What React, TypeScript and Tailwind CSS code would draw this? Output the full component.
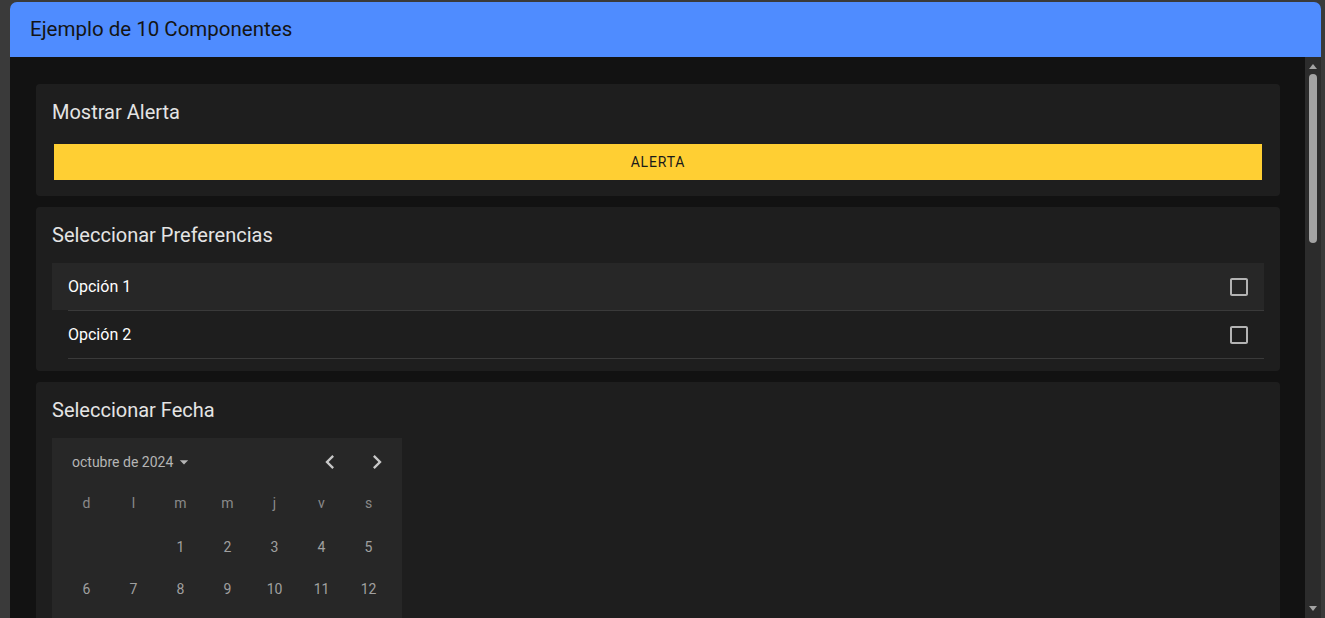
const font = { fontFamily: "Roboto, 'Liberation Sans', sans-serif" };

const weekDays = ["d", "l", "m", "m", "j", "v", "s"];
const weeks = [
  ["", "", "1", "2", "3", "4", "5"],
  ["6", "7", "8", "9", "10", "11", "12"],
];

function Card({ title, children, pb = "pb-4" }: { title: string; children: React.ReactNode; pb?: string }) {
  return (
    <section className={`rounded bg-[#1e1e1e] px-4 pt-4 ${pb}`}>
      <h2 className="h-6 text-[20px] leading-6 text-[#e4e4e4]">{title}</h2>
      {children}
    </section>
  );
}

function CheckboxIcon() {
  return (
    <svg viewBox="0 0 24 24" className="h-6 w-6 fill-[#b3b3b3]">
      <path d="M19 5v14H5V5h14m0-2H5c-1.11 0-2 .9-2 2v14c0 1.1.89 2 2 2h14c1.1 0 2-.9 2-2V5c0-1.1-.9-2-2-2z" />
    </svg>
  );
}

function Calendar() {
  return (
    <div className="mt-4 h-[200px] w-[350px] bg-[#272727] pt-3">
      <div className="flex h-6 items-center pl-5 pr-[7px]">
        <span className="text-[14px] text-[#b5b5b5]">octubre de 2024</span>
        <svg viewBox="0 0 24 24" className="ml-[1px] h-5 w-5 fill-[#b5b5b5]">
          <path d="M7 10l5 5 5-5z" />
        </svg>
        <div className="ml-auto flex gap-[11px]">
          <button className="flex h-9 w-9 items-center justify-center">
            <svg viewBox="0 0 24 24" className="h-7 w-7 fill-[#c8c8c8]">
              <path d="M15.41 7.41 14 6l-6 6 6 6 1.41-1.41L10.83 12z" />
            </svg>
          </button>
          <button className="flex h-9 w-9 items-center justify-center">
            <svg viewBox="0 0 24 24" className="h-7 w-7 fill-[#c8c8c8]">
              <path d="M10 6 8.59 7.41 13.17 12l-4.58 4.59L10 18l6-6z" />
            </svg>
          </button>
        </div>
      </div>
      <div className="mt-[17px] grid grid-cols-[repeat(7,47px)] pl-[11px]">
        {weekDays.map((d, i) => (
          <div key={i} className="flex h-6 items-center justify-center text-[14px] text-[#8a8a8a]">
            {d}
          </div>
        ))}
      </div>
      <div className="mt-[11px]">
        {weeks.map((w, i) => (
          <div key={i} className="grid h-[42px] grid-cols-[repeat(7,47px)] pl-[11px]">
            {w.map((d, j) => (
              <div key={j} className="flex items-center justify-center text-[14px] text-[#a0a0a0]">
                {d}
              </div>
            ))}
          </div>
        ))}
      </div>
    </div>
  );
}

export default function App() {
  return (
    <div className="h-[618px] w-full overflow-hidden bg-[#3a3a3a] pl-[10px] pt-[2px]" style={font}>
      <div className="flex h-[616px] w-[1311px] flex-col overflow-hidden rounded-t-[7px]">
        <header className="flex h-[55px] shrink-0 items-center bg-[#4f8cff] px-5 text-[20.5px] text-[#141414]">
          Ejemplo de 10 Componentes
        </header>
        <div className="flex min-h-0 flex-1 bg-[#121212]">
          <main className="flex flex-1 flex-col gap-[11px] overflow-hidden pl-[26px] pr-[25px] pt-[27px]">
            <Card title="Mostrar Alerta">
              <button className="mx-[2px] mt-[20px] flex h-9 w-[calc(100%-4px)] items-center justify-center bg-[#ffcf33] text-[14px] tracking-[0.06em] text-[#1a1a1a]">
                ALERTA
              </button>
            </Card>
            <Card title="Seleccionar Preferencias" pb="pb-3">
              <ul className="mt-4">
                {["Opción 1", "Opción 2"].map((o, i) => (
                  <li key={o}>
                    <div className={`flex h-[47px] items-center pl-4 pr-[13px] ${i === 0 ? "bg-[#272727]" : ""}`}>
                      <span className="text-[16px] text-white">{o}</span>
                      <span className="ml-auto">
                        <CheckboxIcon />
                      </span>
                    </div>
                    <div className="ml-4 h-px bg-[#3a3a3a]" />
                  </li>
                ))}
              </ul>
            </Card>
            <Card title="Seleccionar Fecha">
              <Calendar />
            </Card>
          </main>
          <aside className="flex w-4 shrink-0 flex-col items-center bg-[#2c2c2c] py-[4px]">
            <div className="mt-[3px] h-0 w-0 border-x-[4px] border-b-[5px] border-x-transparent border-b-[#a3a3a3]" />
            <div className="mt-[5px] h-[169px] w-2 rounded-full bg-[#a3a3a3]" />
            <div className="flex-1" />
            <div className="mb-[3px] h-0 w-0 border-x-[4px] border-t-[5px] border-x-transparent border-t-[#a3a3a3]" />
          </aside>
        </div>
      </div>
    </div>
  );
}
